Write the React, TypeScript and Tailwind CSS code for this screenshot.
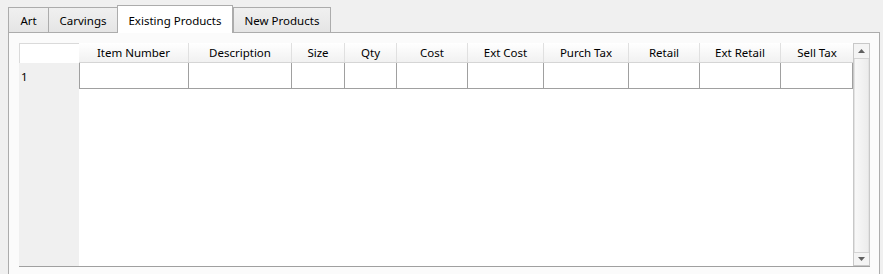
import React from 'react';

const columns = [
  { name: 'Item Number', w: 'w-[109px]' },
  { name: 'Description', w: 'w-[103px]' },
  { name: 'Size', w: 'w-[53px]' },
  { name: 'Qty', w: 'w-[52px]' },
  { name: 'Cost', w: 'w-[71px]' },
  { name: 'Ext Cost', w: 'w-[76px]' },
  { name: 'Purch Tax', w: 'w-[85px]' },
  { name: 'Retail', w: 'w-[71px]' },
  { name: 'Ext Retail', w: 'w-[81px]' },
  { name: 'Sell Tax', w: 'w-[73px]' },
];

const tabs = [
  { label: 'Art', w: 'w-[41px]', active: false },
  { label: 'Carvings', w: 'w-[70px] -ml-px', active: false },
  { label: 'Existing Products', w: 'w-[116px] -ml-px', active: true },
  { label: 'New Products', w: 'w-[98px]', active: false },
];

function Tab({ label, w, active }: { label: string; w: string; active: boolean }) {
  if (active) {
    return (
      <div
        className={`${w} relative z-10 h-[28px] -mb-px flex items-start justify-center pt-[6px] bg-white border border-b-0 border-[#acacac] text-[11.5px] text-black`}
      >
        {label}
      </div>
    );
  }
  return (
    <div
      className={`${w} h-[25px] flex items-center justify-center pt-[2px] bg-gradient-to-b from-[#f0f0f0] to-[#e5e5e5] border border-b-0 border-[#acacac] text-[11.5px] text-black`}
    >
      {label}
    </div>
  );
}

function ScrollBar() {
  return (
    <div className="w-[17px] h-full flex flex-col bg-[#f0f0f0] border border-[#c8c8c8]">
      <div className="h-[15px] flex items-center justify-center border-b border-[#d4d4d4] bg-[#f4f4f4]">
        <svg width="7" height="4" viewBox="0 0 7 4">
          <path d="M0 4 L3.5 0 L7 4 Z" fill="#606060" />
        </svg>
      </div>
      <div className="flex-1 bg-gradient-to-r from-[#f8f8f8] to-[#ececec] border-x border-[#e2e2e2]" />
      <div className="h-[13px] flex items-center justify-center border-t border-[#d4d4d4] bg-[#f4f4f4]">
        <svg width="7" height="4" viewBox="0 0 7 4">
          <path d="M0 0 L3.5 4 L7 0 Z" fill="#606060" />
        </svg>
      </div>
    </div>
  );
}

export default function App() {
  return (
    <div
      className="w-[883px] h-[274px] bg-[#f0f0f0] pl-[8px] pt-[5px] flex flex-col overflow-hidden"
      style={{ fontFamily: '"Noto Sans", "Open Sans", sans-serif' }}
    >
      <div className="flex items-end h-[27px]">
        {tabs.map((t) => (
          <Tab key={t.label} {...t} />
        ))}
      </div>

      <div className="w-[872px] flex-1 border border-b-0 border-[#acacac] bg-[#fbfbfb] pl-[10px] pt-[10px]">
        <div className="w-[851px] h-[224px] flex border-b border-[#a0a0a0]">
          {/* row header column */}
          <div className="w-[60px] flex flex-col bg-[#f0f0f0]">
            <div className="h-[20px] bg-white border-t border-l border-[#dadada]" />
            <div className="h-[26px] flex items-center pl-[2px] pt-[1px] text-[11.5px] text-black">1</div>
          </div>

          {/* grid */}
          <div className="w-[774px] flex flex-col bg-white">
            <div className="h-[20px] flex bg-gradient-to-b from-white to-[#f1f1f1] border-b border-[#d5d5d5]">
              {columns.map((c, i) => (
                <div
                  key={c.name}
                  className={`${c.w} flex items-center justify-center pt-[1px] text-[11.5px] text-black ${i > 0 ? 'border-l border-[#e0e0e0]' : ''}`}
                >
                  {c.name}
                </div>
              ))}
            </div>
            <div className="h-[26px] flex border-b border-[#a0a0a0]">
              {columns.map((c, i) => (
                <div
                  key={c.name}
                  className={`${c.w} border-l border-[#a0a0a0] ${i === columns.length - 1 ? 'border-r' : ''}`}
                />
              ))}
            </div>
          </div>

          <ScrollBar />
        </div>
      </div>
    </div>
  );
}
